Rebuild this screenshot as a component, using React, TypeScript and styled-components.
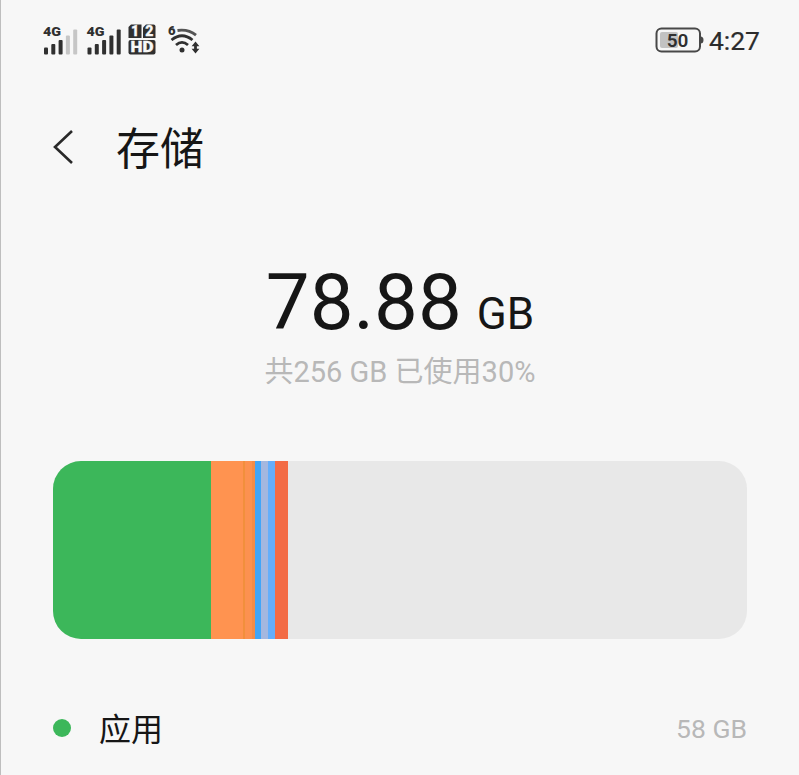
import React from "react";
import styled, { createGlobalStyle } from "styled-components";

const GlobalStyle = createGlobalStyle`
  * { box-sizing: border-box; }
  body { margin: 0; background: #f7f7f7; }
`;

const Screen = styled.main`
  height: 775px;
  overflow: hidden;
  background: #f7f7f7;
  border-left: 1px solid #bebebe;
  color: #161616;
  font-family: Roboto, "Noto Sans CJK SC", sans-serif;
  display: flex;
  flex-direction: column;
`;

const StatusBar = styled.header`
  height: 82px;
  padding: 0 39px 0 41px;
  display: flex;
  align-items: center;
  justify-content: space-between;
  flex: none;
`;

const StatusGroup = styled.div`
  display: flex;
  align-items: center;
`;

const StatusIcons = styled.svg`
  display: block;
  width: 164px;
  height: 40px;
  font-family: Roboto, sans-serif;
`;

const Battery = styled.svg`
  display: block;
  width: 50px;
  height: 30px;
  font-family: Roboto, sans-serif;
`;

const Clock = styled.time`
  margin-left: 4px;
  font-size: 26.5px;
  line-height: 30px;
  color: #2c2c2c;
  -webkit-text-stroke: 0.2px #2c2c2c;
`;

const TitleBar = styled.nav`
  height: 132px;
  padding-left: 51px;
  display: flex;
  align-items: center;
  gap: 41px;
  flex: none;
`;

const BackButton = styled.button`
  width: 23px;
  height: 36px;
  padding: 0;
  border: 0;
  background: none;
  display: block;
`;

const Title = styled.h1`
  margin: 0;
  padding-top: 3px;
  font-size: 44px;
  line-height: 60px;
  font-weight: 400;
`;

const Summary = styled.section`
  height: 247px;
  padding-top: 43px;
  display: flex;
  flex-direction: column;
  align-items: center;
  flex: none;
`;

const Amount = styled.div`
  display: flex;
  align-items: baseline;
  gap: 15px;
  height: 92px;
  line-height: 92px;
`;

const AmountValue = styled.span`
  font-size: 78px;
`;

const AmountUnit = styled.span`
  font-size: 44px;
`;

const Caption = styled.p`
  margin: 3px 0 0;
  font-size: 29px;
  line-height: 40px;
  color: #b8b8b8;
  white-space: nowrap;
`;

const UsageBar = styled.div`
  flex: none;
  height: 178px;
  margin: 0 52px 0 52px;
  border-radius: 28px;
  overflow: hidden;
  display: flex;
  background: #e8e8e8;
`;

const Segment = styled.div<{ $width: number; $color: string }>`
  width: ${(p) => p.$width}px;
  background: ${(p) => p.$color};
  flex: none;
`;

const Category = styled.div`
  flex: none;
  height: 60px;
  margin: 59px 52px 0 52px;
  display: flex;
  align-items: center;
`;

const Dot = styled.span`
  width: 18px;
  height: 18px;
  border-radius: 50%;
  background: #3cb75a;
`;

const CategoryName = styled.span`
  margin-left: 28px;
  padding-top: 3px;
  font-size: 32px;
  line-height: 40px;
`;

const CategorySize = styled.span`
  margin-left: auto;
  padding-top: 2px;
  font-size: 26.5px;
  line-height: 40px;
  color: #b8b8b8;
`;

const segments = [
  { width: 158, color: "#3cb75a" },
  { width: 32, color: "#ff9350" },
  { width: 2, color: "#f28f3c" },
  { width: 7, color: "#fc9150" },
  { width: 3, color: "#f28c48" },
  { width: 6, color: "#41a5f8" },
  { width: 7, color: "#a4b7df" },
  { width: 7, color: "#64aefb" },
  { width: 13, color: "#f36b45" },
];

const Signal = ({ x, faded }: { x: number; faded: number }) => (
  <g transform={`translate(${x} 0)`}>
    <text x="0" y="15" fontSize="13" fontWeight="900" fill="#303030" textLength="18" lengthAdjust="spacingAndGlyphs">
      4G
    </text>
    {[7, 10.5, 14.5, 19, 25].map((h, i) => (
      <rect key={i} x={1 + i * 7.3} y={33.5 - h} width="4" height={h} rx="1" fill={i >= 5 - faded ? "#c6c6c6" : "#303030"} />
    ))}
  </g>
);

export default function App() {
  return (
    <>
      <GlobalStyle />
      <Screen>
        <StatusBar>
          <StatusIcons viewBox="0 0 164 40">
            <Signal x={1} faded={2} />
            <Signal x={44.5} faded={0} />
            <g fill="#303030">
              <path d="M89 3.5h10.5v13.5H86.500V6z" />
              <path d="M104 3.5h7.500a2 2 0 0 1 2 2v11.500H101V6.500z" />
              <rect x="86.500" y="19" width="27" height="14.500" rx="2" />
            </g>
            <g fill="#f7f7f7" stroke="#f7f7f7" strokeWidth="0.300" fontSize="14" fontWeight="900" textAnchor="middle">
              <text x="93" y="15.300">1</text>
              <text x="107.300" y="15.300">2</text>
              <text x="100" y="31.200" textLength="23" lengthAdjust="spacingAndGlyphs">HD</text>
            </g>
            <text x="126" y="14" fontSize="13" fontWeight="900" fill="#303030">6</text>
            <g fill="none" stroke="#303030" strokeWidth="2.800">
              <path d="M135.500 9.500Q146.500 8 154 14.200" stroke="#555" />
              <path d="M129.500 19Q140 10.500 150.500 19" />
              <path d="M134 24Q140 18.800 146 24" />
            </g>
            <circle cx="140" cy="29" r="2.500" fill="#303030" />
            <path d="M153.500 20.500l3.900 4.700h-2.500v2.600h2.500l-3.900 4.700-3.900-4.700h2.500v-2.600h-2.500z" fill="#303030" />
          </StatusIcons>
          <StatusGroup>
            <Battery viewBox="0 0 50 30">
              <rect x="1.500" y="2.500" width="43.500" height="23" rx="5" fill="none" stroke="#484848" strokeWidth="2" />
              <path d="M45.500 10.500q3 0 3 3.500t-3 3.500z" fill="#484848" />
              <rect x="5" y="6" width="18" height="16" rx="2" fill="#c2c2c2" />
              <text x="22.500" y="20.500" fontSize="19" fontWeight="600" fill="#303030" textAnchor="middle">50</text>
            </Battery>
            <Clock>4:27</Clock>
          </StatusGroup>
        </StatusBar>
        <TitleBar>
          <BackButton aria-label="返回">
            <svg width="23" height="36" viewBox="0 0 23 36" fill="none" stroke="#292929" strokeWidth="2.600">
              <path d="M20 1L3 17L20 33" />
            </svg>
          </BackButton>
          <Title>存储</Title>
        </TitleBar>
        <Summary>
          <Amount>
            <AmountValue>78.88</AmountValue>
            <AmountUnit>GB</AmountUnit>
          </Amount>
          <Caption>共256 GB 已使用30%</Caption>
        </Summary>
        <UsageBar>
          {segments.map((s, i) => (
            <Segment key={i} $width={s.width} $color={s.color} />
          ))}
        </UsageBar>
        <Category>
          <Dot />
          <CategoryName>应用</CategoryName>
          <CategorySize>58 GB</CategorySize>
        </Category>
      </Screen>
    </>
  );
}
